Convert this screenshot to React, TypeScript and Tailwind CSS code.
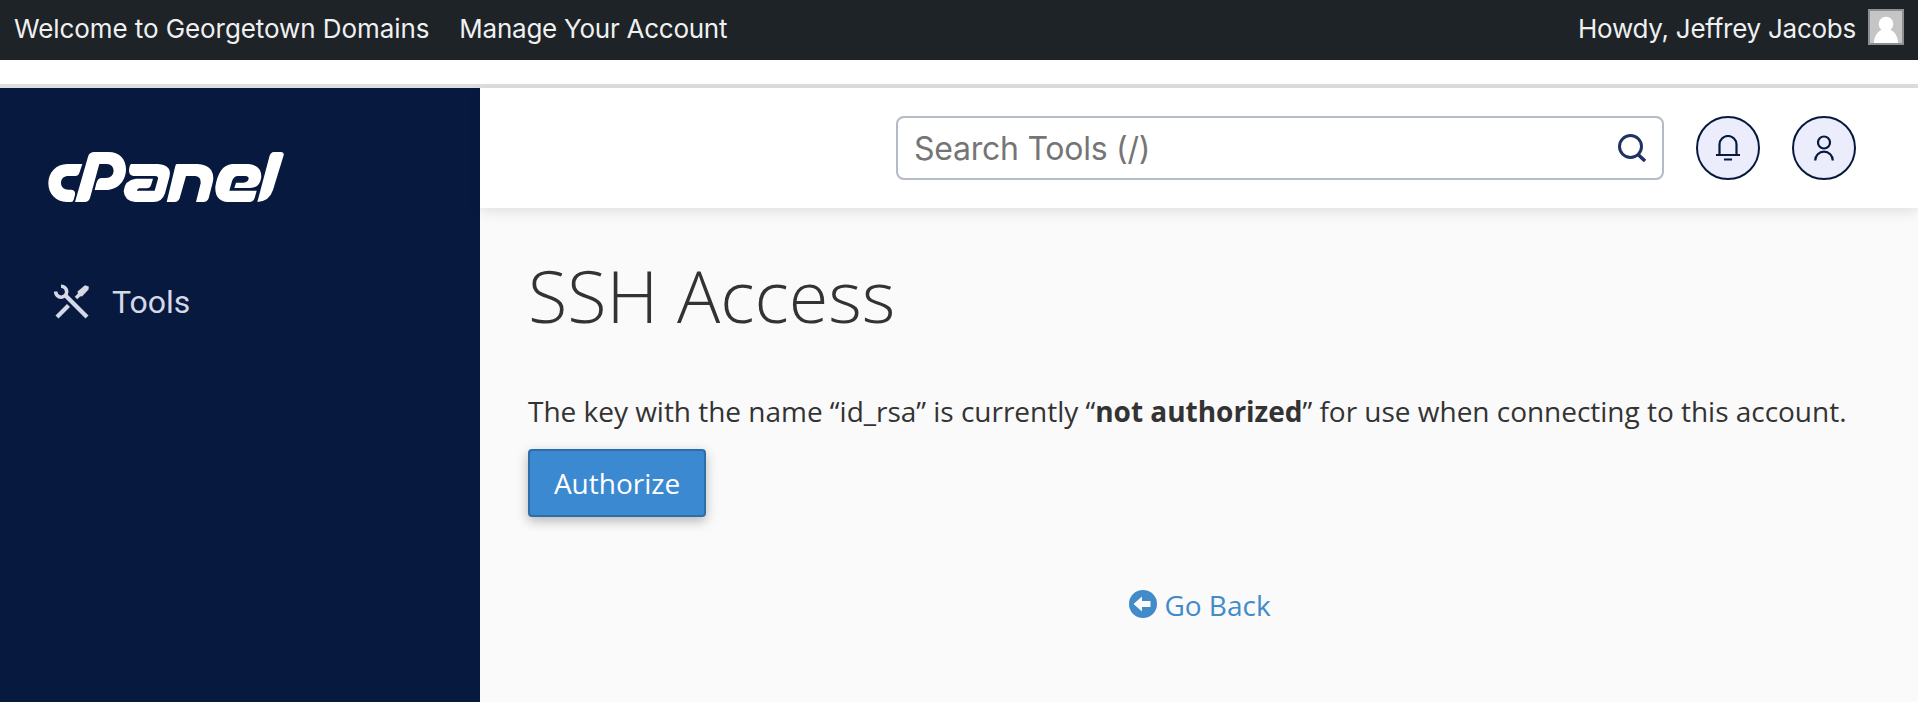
function Logo() {
  return (
    <svg viewBox="54 66 708 150" className="h-[50px] w-[236px]" fill="#fff" role="img" aria-label="cPanel">
      <path d="M157 102H112C78 102 55 128 55 160C55 192 78 216 110 216H123Q129 216 131 209L135 194Q137 180 124 179H116C101 179 93 170 93 158C93 146 102 138 116 138H136Q145 138 148 129Z" />
      <path d="M135 216L174 80Q178 66 193 66H236C268 66 288 88 288 117C288 152 264 180 228 180H194L199 160Q203 144 216 144H228Q249 143 251 123Q250 103 231 102H208L180 204Q176 216 164 216Z" />
      <path d="M304 102H384Q428 106 418 142L405 190Q397 216 370 216H316Q283 213 281 183Q284 150 318 146H369L363 166Q360 175 350 175H328Q321 176 321 182H374L384 146Q385 138 376 138H310Q296 136 297 120Q299 102 304 102Z" />
      <path d="M440 102H502Q556 106 549 154L536 205Q532 216 520 216H498L512 160Q514 140 496 138H468L449 205Q445 216 433 216H410L435 112Q437 102 440 102Z" />
      <path d="M606 102H656Q694 106 694 140Q690 174 660 174H613L618 158H640Q654 156 656 146Q656 138 646 138H622Q610 140 606 154L598 182H680L674 204Q670 216 658 216H590Q554 212 556 170Q566 106 606 102Z" />
      <path d="M732 66H754Q763 67 761 76L729 180Q718 214 682 216L718 80Q722 66 732 66Z" />
    </svg>
  );
}

function ToolsIcon() {
  return (
    <svg viewBox="0 0 36 36" className="size-9" fill="none" stroke="#d5d9e6">
      <path d="M12 12L33 33" strokeWidth="4.200" />
      <path d="M3 33L14.500 21.500" strokeWidth="4.200" />
      <path d="M7 2.200A5.500 5.500 0 1 1 1.700 7.500" strokeWidth="3.600" />
      <path d="M22 14L26 10" strokeWidth="3.600" />
      <path d="M23.500 7.500L31 1.200L34.800 2.500L34.500 5.500L28 12.500L24.500 12Z" fill="#d5d9e6" stroke="none" />
    </svg>
  );
}

export default function App() {
  return (
    <div className="flex h-[702px] w-full flex-col overflow-hidden bg-white">
      <nav className="flex h-[60px] shrink-0 items-center gap-[30px] bg-[#1d2327] pr-3.5 pl-3.5 font-['Inter',sans-serif] text-[26px] whitespace-nowrap text-[#f0f0f1]">
        <a className="-mt-1 tracking-[-0.08px]">Welcome to Georgetown Domains</a>
        <a className="-mt-1 tracking-[-0.25px]">Manage Your Account</a>
        <div className="ml-auto flex items-center gap-3">
          <span className="-mt-1 tracking-[-0.25px]">Howdy, Jeffrey Jacobs</span>
          <svg viewBox="0 0 36 36" className="-mt-1.5 size-9">
            <rect x="1" y="1" width="34" height="34" fill="#c5c5c5" stroke="#8c8f94" strokeWidth="2" />
            <circle cx="18" cy="15" r="7.300" fill="#fff" />
            <path d="M6 34C6 26 11 20 18 20S30 26 30 34Z" fill="#fff" />
          </svg>
        </div>
      </nav>
      <div className="h-7 shrink-0 border-b-4 border-[#dedede]" />
      <div className="flex min-h-0 flex-1">
        <aside className="w-[480px] shrink-0 bg-[#07193e] pt-16 pl-12">
          <Logo />
          <div className="mt-[75px] flex items-center gap-[22px] pl-1.5">
            <ToolsIcon />
            <span className="font-['Roboto',sans-serif] text-[32px] leading-[50px] text-[#d5d9e6]">Tools</span>
          </div>
        </aside>
        <div className="flex min-w-0 flex-1 flex-col bg-[#fafafa]">
          <header className="flex h-[120px] shrink-0 items-center justify-end gap-8 bg-white pr-[62px] shadow-[0_4px_12px_rgba(0,0,0,0.1)]">
            <div className="flex h-16 w-[768px] items-center justify-between rounded-lg border-2 border-[#b5bac7] pr-4 pl-4">
              <span className="pt-0.5 font-['Inter',sans-serif] text-[32px] tracking-[-0.25px] text-[#757575]">Search Tools (/)</span>
              <svg viewBox="0 0 28 28" className="size-7" fill="none" stroke="#1e3263" strokeWidth="3">
                <circle cx="12.500" cy="12.500" r="11" />
                <path d="M19.500 20L27 27" strokeWidth="3.500" />
              </svg>
            </div>
            <button className="flex size-16 items-center justify-center rounded-full border-2 border-[#07193e] bg-[#ebedfc]">
              <svg viewBox="0 0 24 26" className="h-[26px] w-6" fill="none" stroke="#07193e" strokeWidth="2.200">
                <path d="M3.500 20V9.500A8.500 8.500 0 0 1 20.500 9.500V20M0 20H24M8 24.500H16" />
              </svg>
            </button>
            <button className="flex size-16 items-center justify-center rounded-full border-2 border-[#07193e] bg-[#ebedfc]">
              <svg viewBox="0 0 20 26" className="h-[26px] w-5" fill="none" stroke="#07193e" strokeWidth="2.200">
                <circle cx="10" cy="7.500" r="6" />
                <path d="M1.200 25.500A8.800 8.800 0 0 1 18.800 25.500" />
              </svg>
            </button>
          </header>
          <main className="px-12 pt-[39px] font-['Open_Sans',sans-serif] text-[28px] text-[#333]">
            <h1 className="text-[72px] leading-[96px] font-light">SSH Access</h1>
            <p className="mt-12 leading-10 tracking-[-0.02px] whitespace-nowrap">
              The key with the name “id_rsa” is currently “<b>not authorized</b>” for use when connecting to this account.
            </p>
            <button className="mt-[18px] flex h-[68px] w-[178px] items-center justify-center rounded-[4px] border-2 border-[#2f6da8] bg-[#3b89d0] text-white shadow-[0_4px_12px_rgba(0,0,0,0.28)]">
              Authorize
            </button>
            <a className="mt-[68px] flex items-center justify-center gap-[7px] pl-0.5 leading-10 text-[#428bca]">
              <svg viewBox="0 0 28 28" className="-mt-0.5 size-7">
                <circle cx="14" cy="14" r="14" fill="#428bca" />
                <path d="M4.500 14L13 6.500V11H21.500V17H13V21.500Z" fill="#fafafa" />
              </svg>
              Go Back
            </a>
          </main>
        </div>
      </div>
    </div>
  );
}
